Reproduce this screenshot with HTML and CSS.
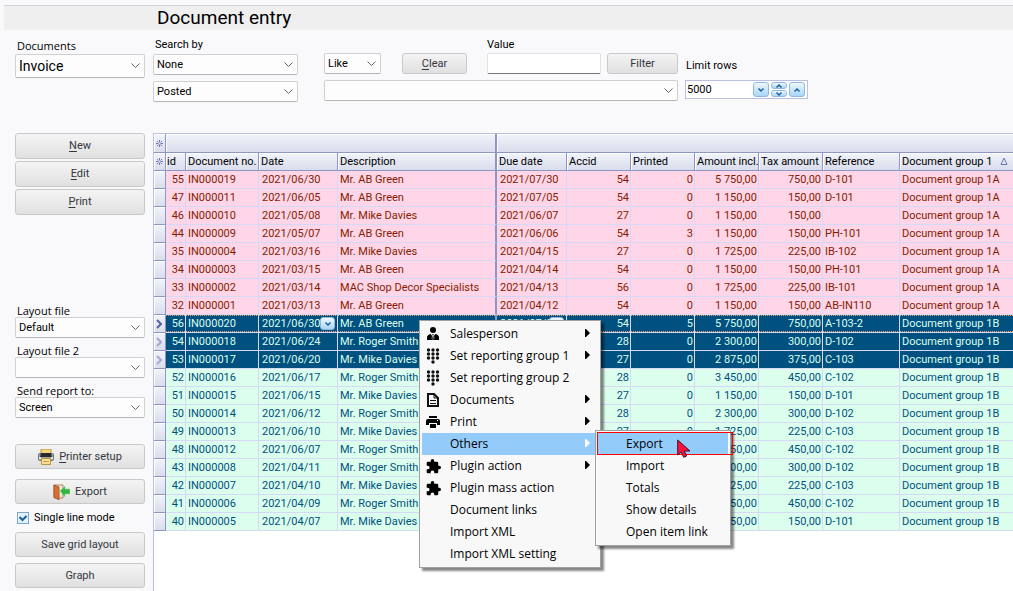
FILE: index.html
```
<!DOCTYPE html>
<html lang="en">
<head>
<meta charset="utf-8">
<title>Document entry</title>
<link rel="stylesheet" href="styles.css">
</head>
<body>
<svg class="defs" aria-hidden="true">
  <symbol id="keypad" viewBox="0 0 14 16"><g fill="#111"><circle cx="2.500" cy="2" r="1.700"/><circle cx="7" cy="2" r="1.700"/><circle cx="11.500" cy="2" r="1.700"/><circle cx="2.500" cy="6" r="1.700"/><circle cx="7" cy="6" r="1.700"/><circle cx="11.500" cy="6" r="1.700"/><circle cx="2.500" cy="10" r="1.700"/><circle cx="7" cy="10" r="1.700"/><circle cx="11.500" cy="10" r="1.700"/><circle cx="7" cy="14" r="1.700"/></g></symbol>
  <symbol id="puzzle" viewBox="1 1 22 22"><path d="M20.500 11H19V7a2 2 0 0 0-2-2h-4V3.500a2.500 2.500 0 0 0-5 0V5H4a2 2 0 0 0-2 2v3.800h1.500a2.700 2.700 0 0 1 0 5.400H2V20a2 2 0 0 0 2 2h3.800v-1.500a2.700 2.700 0 0 1 5.400 0V22H17a2 2 0 0 0 2-2v-4h1.500a2.500 2.500 0 0 0 0-5z"/></symbol>
  <symbol id="arrow" viewBox="0 0 5 8"><path d="M0 0h1l4 4-4 4H0z" fill="currentColor"/></symbol>
  <symbol id="star" viewBox="0 0 9 9"><path d="M4.500 1v2.500M4.500 5.500V8M1 4.500h2.500M5.500 4.500H8M2 2l1.500 1.500M5.500 5.500L7 7M7 2L5.500 3.500M3.500 5.500L2 7" stroke="#6a78b8"/></symbol>
  <symbol id="mark" viewBox="0 0 6 10"><path d="M1 1l4 4-4 4" fill="none" stroke="currentColor" stroke-width="2"/></symbol>
  <symbol id="drop" viewBox="0 0 8 6"><path d="M1.500 1.500L4 4l2.500-2.500" fill="none" stroke="#1d5f9c" stroke-width="1.500"/></symbol>
</svg>
<header class="titlebar"><h1>Document entry</h1></header>
<div class="app">
  <aside class="side">
    <div class="field"><label class="cap" for="docs">Documents</label><select class="tall" id="docs"><option>Invoice</option></select></div>
    <div class="actions">
      <button><span><u>N</u>ew</span></button><button><span><u>E</u>dit</span></button><button><span><u>P</u>rint</span></button>
    </div>
    <div class="layouts">
      <div class="field"><label class="cap" for="l1">Layout file</label><select id="l1"><option>Default</option></select></div>
      <div class="field"><label class="cap" for="l2">Layout file 2</label><select id="l2"><option></option></select></div>
      <div class="field"><label class="cap" for="l3">Send report to:</label><select id="l3"><option>Screen</option></select></div>
    </div>
    <div class="tools">
      <button class="first"><svg width="16" height="16" viewBox="0 0 16 16"><path d="M3 0h10v5H3z" fill="#f4d77c" stroke="#b99545"/><rect x=".5" y="4.500" width="15" height="7" rx="1" fill="#9aa0a6" stroke="#73777c"/><path d="M3 4h10l1 4H2z" fill="#292b2d"/><path d="M1 8h2v2H1zM13 8h2v2h-2z" fill="#e8e9eb"/><path d="M3.500 9.500h9v6h-9z" fill="#f9df8d" stroke="#b99545"/><path d="M5 12.500h6" stroke="#c4a154"/></svg><span><u>P</u>rinter setup</span></button>
      <button><svg width="17" height="16" viewBox="0 0 17 16"><path d="M1 1h9v13H1z" fill="#efe9e2" stroke="#ae8261"/><path d="M1 1l5 2v13l-5-3z" fill="#d9702d" stroke="#a85a27"/><path d="M7 7l5-5v3h5v5h-5v3z" fill="#35b643" stroke="#8bdc90" stroke-width=".6"/></svg><span>Export</span></button>
      <label class="check"><input type="checkbox" checked>Single line mode</label>
      <button>Save grid layout</button>
      <button>Graph</button>
    </div>
  </aside>
  <main class="main">
    <form class="filters">
      <div class="col search">
        <label for="s1">Search by</label>
        <select id="s1"><option>None</option></select>
        <select id="s2" aria-label="Status"><option>Posted</option></select>
      </div>
      <div class="col match">
        <div class="line">
          <select class="like" aria-label="Comparison"><option>Like</option></select>
          <button type="button" class="clear"><span><u>C</u>lear</span></button>
          <div class="value"><label for="val">Value</label><input id="val" type="text"></div>
          <button type="button" class="filter">Filter</button>
        </div>
        <select aria-label="Saved filter"><option></option></select>
      </div>
      <div class="col limit">
        <label for="lim">Limit rows</label>
        <div class="spin"><input id="lim" type="text" value="5000">
          <button type="button" aria-label="Decrease"><svg width="8" height="6"><use href="#drop"/></svg></button>
          <span class="pair"><button type="button" aria-label="Up"><svg width="8" height="6" class="flip"><use href="#drop"/></svg></button><button type="button" aria-label="Down"><svg width="8" height="6"><use href="#drop"/></svg></button></span>
          <button type="button" aria-label="Increase"><svg width="8" height="6" class="flip"><use href="#drop"/></svg></button>
        </div>
      </div>
    </form>
    <div class="grid">
      <table>
        <colgroup><col class="c-mark"><col class="c-id"><col class="c-no"><col class="c-date"><col class="c-desc"><col class="c-due"><col class="c-num"><col class="c-num"><col class="c-num"><col class="c-num"><col class="c-ref"><col></colgroup>
        <thead>
          <tr class="band"><th><svg width="9" height="9"><use href="#star"/></svg></th><th colspan="4" class="fix"></th><th colspan="7"></th></tr>
          <tr><th><svg width="9" height="9"><use href="#star"/></svg></th><th class="idh">id</th><th>Document no.</th><th>Date</th><th class="fix">Description</th><th>Due date</th><th>Accid</th><th>Printed</th><th>Amount incl.</th><th>Tax amount</th><th>Reference</th><th class="sorted">Document group 1<svg width="8" height="8" viewBox="0 0 8 8"><path d="M4 1L7 7.500H1z" fill="none" stroke="#6a78b8"/></svg></th></tr>
        </thead>
        <tbody class="pink">
          <tr><th></th><td>55</td><td>IN000019</td><td>2021/06/30</td><td>Mr. AB Green</td><td>2021/07/30</td><td>54</td><td>0</td><td>5 750,00</td><td>750,00</td><td>D-101</td><td>Document group 1A</td></tr>
          <tr><th></th><td>47</td><td>IN000011</td><td>2021/06/05</td><td>Mr. AB Green</td><td>2021/07/05</td><td>54</td><td>0</td><td>1 150,00</td><td>150,00</td><td>D-101</td><td>Document group 1A</td></tr>
          <tr><th></th><td>46</td><td>IN000010</td><td>2021/05/08</td><td>Mr. Mike Davies</td><td>2021/06/07</td><td>27</td><td>0</td><td>1 150,00</td><td>150,00</td><td></td><td>Document group 1A</td></tr>
          <tr><th></th><td>44</td><td>IN000009</td><td>2021/05/07</td><td>Mr. AB Green</td><td>2021/06/06</td><td>54</td><td>3</td><td>1 150,00</td><td>150,00</td><td>PH-101</td><td>Document group 1A</td></tr>
          <tr><th></th><td>35</td><td>IN000004</td><td>2021/03/16</td><td>Mr. Mike Davies</td><td>2021/04/15</td><td>27</td><td>0</td><td>1 725,00</td><td>225,00</td><td>IB-102</td><td>Document group 1A</td></tr>
          <tr><th></th><td>34</td><td>IN000003</td><td>2021/03/15</td><td>Mr. AB Green</td><td>2021/04/14</td><td>54</td><td>0</td><td>1 150,00</td><td>150,00</td><td>PH-101</td><td>Document group 1A</td></tr>
          <tr><th></th><td>33</td><td>IN000002</td><td>2021/03/14</td><td>MAC Shop Decor Specialists</td><td>2021/04/13</td><td>56</td><td>0</td><td>1 725,00</td><td>225,00</td><td>IB-101</td><td>Document group 1A</td></tr>
          <tr><th></th><td>32</td><td>IN000001</td><td>2021/03/13</td><td>Mr. AB Green</td><td>2021/04/12</td><td>54</td><td>0</td><td>1 150,00</td><td>150,00</td><td>AB-IN110</td><td>Document group 1A</td></tr>
        </tbody>
        <tbody class="sel">
          <tr class="current"><th><svg width="6" height="10"><use href="#mark"/></svg></th><td>56</td><td>IN000020</td><td class="pick">2021/06/30<button aria-label="Pick date"><svg width="8" height="6"><use href="#drop"/></svg></button></td><td>Mr. AB Green</td><td class="pick">2021/07/30<button aria-label="Pick due date"><svg width="8" height="6"><use href="#drop"/></svg></button></td><td>54</td><td>5</td><td>5 750,00</td><td>750,00</td><td>A-103-2</td><td>Document group 1B</td></tr>
          <tr><th><svg width="6" height="10"><use href="#mark"/></svg></th><td>54</td><td>IN000018</td><td>2021/06/24</td><td>Mr. Roger Smith</td><td></td><td>28</td><td>0</td><td>2 300,00</td><td>300,00</td><td>D-102</td><td>Document group 1B</td></tr>
          <tr><th><svg width="6" height="10"><use href="#mark"/></svg></th><td>53</td><td>IN000017</td><td>2021/06/20</td><td>Mr. Mike Davies</td><td></td><td>27</td><td>0</td><td>2 875,00</td><td>375,00</td><td>C-103</td><td>Document group 1B</td></tr>
        </tbody>
        <tbody class="mint">
          <tr><th></th><td>52</td><td>IN000016</td><td>2021/06/17</td><td>Mr. Roger Smith</td><td></td><td>28</td><td>0</td><td>3 450,00</td><td>450,00</td><td>C-102</td><td>Document group 1B</td></tr>
          <tr><th></th><td>51</td><td>IN000015</td><td>2021/06/15</td><td>Mr. Mike Davies</td><td></td><td>27</td><td>0</td><td>1 150,00</td><td>150,00</td><td>D-101</td><td>Document group 1B</td></tr>
          <tr><th></th><td>50</td><td>IN000014</td><td>2021/06/12</td><td>Mr. Roger Smith</td><td></td><td>28</td><td>0</td><td>2 300,00</td><td>300,00</td><td>D-102</td><td>Document group 1B</td></tr>
          <tr><th></th><td>49</td><td>IN000013</td><td>2021/06/10</td><td>Mr. Mike Davies</td><td></td><td>27</td><td>0</td><td>1 725,00</td><td>225,00</td><td>C-103</td><td>Document group 1B</td></tr>
          <tr><th></th><td>48</td><td>IN000012</td><td>2021/06/07</td><td>Mr. Roger Smith</td><td></td><td></td><td></td><td>3 450,00</td><td>450,00</td><td>C-102</td><td>Document group 1B</td></tr>
          <tr><th></th><td>43</td><td>IN000008</td><td>2021/04/11</td><td>Mr. Roger Smith</td><td></td><td></td><td></td><td>2 300,00</td><td>300,00</td><td>D-102</td><td>Document group 1B</td></tr>
          <tr><th></th><td>42</td><td>IN000007</td><td>2021/04/10</td><td>Mr. Mike Davies</td><td></td><td></td><td></td><td>1 725,00</td><td>225,00</td><td>C-103</td><td>Document group 1B</td></tr>
          <tr><th></th><td>41</td><td>IN000006</td><td>2021/04/09</td><td>Mr. Roger Smith</td><td></td><td></td><td></td><td>3 450,00</td><td>450,00</td><td>C-102</td><td>Document group 1B</td></tr>
          <tr><th></th><td>40</td><td>IN000005</td><td>2021/04/07</td><td>Mr. Mike Davies</td><td></td><td></td><td></td><td>1 150,00</td><td>150,00</td><td>D-101</td><td>Document group 1B</td></tr>
        </tbody>
      </table>
    </div>
  </main>
</div>

<div class="menu context" role="menu">
  <button role="menuitem"><i><svg width="12" height="14" viewBox="0 0 12 14"><circle cx="6" cy="3" r="3"/><path d="M0 13V10.500q0-2.500 3.500-3.500L6 10l2.500-3q3.500 1 3.500 3.500V13z"/><path d="M4.500 7h3L6.500 8.500 7 11.500l-1 1-1-1 .5-3z" stroke="#f8f8f8" stroke-width=".6"/></svg></i><span>Salesperson</span><svg class="more"><use href="#arrow"/></svg></button>
  <button role="menuitem"><i><svg width="14" height="16"><use href="#keypad"/></svg></i><span>Set reporting group 1</span><svg class="more"><use href="#arrow"/></svg></button>
  <button role="menuitem"><i><svg width="14" height="16"><use href="#keypad"/></svg></i><span>Set reporting group 2</span></button>
  <button role="menuitem"><i><svg width="12" height="14" viewBox="0 0 12 14"><path d="M1 1h6l4 4v8H1z" fill="none" stroke="#111" stroke-width="2"/><path d="M7 1v4h4M3 7.500h6M3 10.500h6" fill="none" stroke="#111"/></svg></i><span>Documents</span><svg class="more"><use href="#arrow"/></svg></button>
  <button role="menuitem"><i><svg width="14" height="12" viewBox="0 0 14 12"><path d="M3 0h8v2H3zM2 3h10q2 0 2 2v4h-3V7H3v2H0V5q0-2 2-2z"/><path d="M4 8h6v4H4z"/><path d="M11 4.500h1" stroke="#fff"/></svg></i><span>Print</span><svg class="more"><use href="#arrow"/></svg></button>
  <button role="menuitem" class="on"><i></i><span>Others</span><svg class="more"><use href="#arrow"/></svg></button>
  <button role="menuitem"><i><svg width="15" height="15"><use href="#puzzle"/></svg></i><span>Plugin action</span><svg class="more"><use href="#arrow"/></svg></button>
  <button role="menuitem"><i><svg width="15" height="15"><use href="#puzzle"/></svg></i><span>Plugin mass action</span></button>
  <button role="menuitem"><i></i><span>Document links</span></button>
  <button role="menuitem"><i></i><span>Import XML</span></button>
  <button role="menuitem"><i></i><span>Import XML setting</span></button>
</div>
<div class="menu submenu" role="menu">
  <button role="menuitem" class="on"><i></i><span>Export</span></button>
  <button role="menuitem"><i></i><span>Import</span></button>
  <button role="menuitem"><i></i><span>Totals</span></button>
  <button role="menuitem"><i></i><span>Show details</span></button>
  <button role="menuitem"><i></i><span>Open item link</span></button>
  <div class="ring"></div>
  <svg class="cursor" width="14" height="19" viewBox="0 0 14 19"><path d="M.7 1v15l3.500-3 2.500 5.300 3-1.300-2.500-5H13z" fill="#f5123d" stroke="#4a1020"/></svg>
</div>
</body>
</html>
```
FILE: styles.css
```
* { box-sizing: border-box; }
html, body { height: 100%; }
body {
  margin: 0;
  display: flex;
  flex-direction: column;
  position: relative;
  overflow: hidden;
  background: #f9f9fc;
  font: 11px/16px Roboto, "Liberation Sans", sans-serif;
  color: #000;
}
.defs { position: absolute; width: 0; height: 0; }
button, input, select { font: inherit; color: inherit; margin: 0; }
svg { display: block; flex: none; }

.titlebar {
  margin: 5px 0 0 4px;
  padding-left: 153px;
  background: #efefef;
  border-top: 1px solid #d4d4d4;
}
.titlebar h1 { margin: 0; font: 400 19px/24px Roboto, "Liberation Sans", sans-serif; }

.app { flex: 1; display: grid; grid-template-columns: 153px 1fr; min-height: 0; }

select {
  appearance: none;
  display: block;
  width: 100%;
  height: 21px;
  padding: 0 16px 0 3px;
  border: 1px solid #d0d0d0;
  border-bottom-color: #b4b4b4;
  border-radius: 2px;
  background: #fdfdfd url("data:image/svg+xml,%3Csvg xmlns='http://www.w3.org/2000/svg' width='9' height='6'%3E%3Cpath d='M.5 .5l4 4 4-4' fill='none' stroke='%23666'/%3E%3C/svg%3E") no-repeat right 4px center;
}
button {
  display: flex;
  align-items: center;
  justify-content: center;
  gap: 5px;
  padding: 0;
  border: 1px solid #c8c8c8;
  border-radius: 3px;
  background: linear-gradient(#f4f4f4, #e0e0e0);
  color: #33373d;
}
u { text-underline-offset: 2px; }

/* sidebar */
.side { display: flex; flex-direction: column; padding: 8px 8px 0 15px; }
.side button { height: 26px; width: 100%; }
.cap { display: block; padding-left: 2px; font: 11px/16px "Open Sans", "Noto Sans", sans-serif; }
.side .tall { height: 24px; font-size: 14px; }
.actions { display: grid; gap: 2px; margin-top: 55px; }
.layouts { display: grid; gap: 7px; margin-top: 90px; }
.layouts .cap { line-height: 12px; }
.tools { display: grid; gap: 6px; margin-top: 26px; }
.side .tools button { height: 25px; }
.tools .first { margin-bottom: 4px; }
.check { display: flex; align-items: center; gap: 5px; padding-left: 2px; height: 16px; }
.check input {
  appearance: none;
  width: 12px;
  height: 12px;
  border: 1px solid #7ba6d4;
  background: #e3f1ff url("data:image/svg+xml,%3Csvg xmlns='http://www.w3.org/2000/svg' width='10' height='10'%3E%3Cpath d='M1.500 4l3 3 4-4' fill='none' stroke='%231d5f9c' stroke-width='2'/%3E%3C/svg%3E") no-repeat center;
}

/* filters */
.main { display: flex; flex-direction: column; min-width: 0; }
.filters { display: flex; height: 103px; padding-top: 7px; }
.col { display: flex; flex-direction: column; gap: 6px; }
.search { width: 145px; }
.search label { padding-left: 2px; margin-bottom: -5px; }
.match { width: 354px; margin-left: 26px; }
.line { display: flex; align-items: flex-end; }
.like { width: 57px; }
.clear { width: 65px; height: 21px; margin-left: 21px; }
.value { width: 115px; margin-left: 19px; padding-left: 1px; }
.value label { display: block; }
.value input {
  display: block;
  width: 100%;
  height: 21px;
  border: 1px solid #e2e2e2;
  border-bottom-color: #777;
  border-radius: 2px;
  background: #fff;
}
.filter { flex: 1; height: 21px; margin-left: 6px; }
.limit { width: 123px; margin-left: 7px; padding-top: 21px; }
.limit label { padding-left: 1px; }
.spin { display: flex; align-items: center; gap: 2px; height: 19px; padding-right: 2px; border: 1px solid #b9bfe0; background: #fff; }
.spin input { flex: 1; min-width: 0; padding: 0 1px; border: 0; background: none; }
.spin button, .pick button { width: 16px; height: 15px; border-color: #8fb8dc; background: linear-gradient(#eef8ff, #a9d5f7); }
.pair { display: grid; gap: 1px; }
.spin .pair button { height: 7px; }
.flip { transform: rotate(180deg); }

/* data grid */
.grid { flex: 1; border: 1px solid #b9bfdc; border-width: 1px 0 0 1px; background: #fff; }
table { width: 100%; table-layout: fixed; border-spacing: 0; border-collapse: separate; }
.c-mark { width: 12px; } .c-id { width: 20px; } .c-no { width: 73px; } .c-date { width: 79px; }
.c-desc { width: 159px; } .c-due { width: 70px; } .c-num { width: 64px; } .c-ref { width: 77px; }
th, td {
  height: 18px;
  padding: 1px 2px 0;
  font-weight: 400;
  line-height: 16px;
  text-align: left;
  white-space: nowrap;
  overflow: hidden;
  border-right: 1px solid #d6d9f6;
  border-bottom: 1px solid #d6d9f6;
}
th {
  border-color: #8e96c6;
  background: linear-gradient(#f2f4fa, #d9dcec);
  box-shadow: inset 1px 1px #fff;
}
thead th { padding-left: 1px; padding-top: 0; }
.band th { height: 19px; }
tbody th:first-child { padding: 0 2px; }
tbody th svg { color: #a3a9d3; }
.current th svg { color: #5560a5; }
thead .fix, td:nth-child(5) { border-right: 2px solid #8e96c6; }
thead th:last-child, td:last-child { border-right: 0; }
thead th:nth-child(n+3) { padding-left: 2px; padding-right: 0; }
.sorted svg { display: inline-block; margin-left: 8px; }
td:nth-child(4), td:nth-child(6) { padding-left: 3px; }
td:nth-child(2), td:nth-child(n+7):nth-child(-n+10) { text-align: right; padding: 1px 1px 0; }
.pink td { background: #ffd6e8; color: #851c00; }
.mint td { background: #dcffed; color: #00507f; }
.sel td { background: #005080; color: #dcffed; }
.current td { background: repeating-linear-gradient(90deg, #e8a070 0 1px, #005080 1px 2px) top / 100% 1px no-repeat, repeating-linear-gradient(90deg, #e8a070 0 1px, #005080 1px 2px) bottom / 100% 1px no-repeat, #005080; }
.pick { position: relative; }
.pick button { position: absolute; right: 2px; top: 2px; height: 13px; width: 15px; }

/* menus */
.menu {
  position: absolute;
  padding: 2px;
  border: 1px solid #a0a0a0;
  background: #f8f8f8;
  box-shadow: 3px 3px 2px #0007;
}
.context { left: 419px; top: 320px; width: 182px; }
.submenu { left: 595px; top: 430px; width: 136px; }
.menu button {
  width: 100%;
  height: 22px;
  gap: 0;
  justify-content: flex-start;
  border: 0;
  border-radius: 0;
  background: none;
  color: #000;
  font: 12px/22px "Open Sans", "Noto Sans", sans-serif;
}
.menu i { width: 28px; display: flex; justify-content: center; padding-right: 6px; }
.menu span { flex: 1; text-align: left; white-space: nowrap; }
.more { width: 5px; height: 8px; margin: 0 8px 2px 0; }
.menu .on { background: #93cbfa; }
.context .on .more { color: #fff; }
.ring { position: absolute; left: 1px; top: 1px; width: 136px; height: 23px; border: 1px solid #f00; }
.cursor { position: absolute; left: 81px; top: 8px; }
```
